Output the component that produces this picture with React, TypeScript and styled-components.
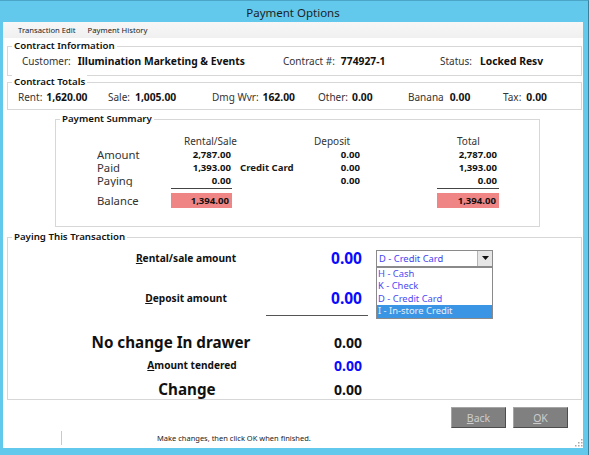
import React from "react";
import styled, { createGlobalStyle } from "styled-components";

const Global = createGlobalStyle`
  html, body { margin: 0; padding: 0; background: #ffffff; }
  body { font-family: "Noto Sans", "DejaVu Sans", sans-serif; color: #1a1a1a; }
  * { box-sizing: border-box; }
`;

const Frame = styled.div`
  width: 589px;
  height: 455px;
  background: #62c9ec;
  border-top: 1px solid #4aa5c6;
  border-right: 1px solid #3d7f98;
  padding: 0 5px 7px 3px;
  display: flex;
  flex-direction: column;
`;

const TitleBar = styled.div`
  height: 21px;
  padding-top: 2px;
  text-align: center;
  font-size: 11.5px;
  line-height: 19px;
  color: #1e1e1e;
`;

const Client = styled.div`
  flex: 1;
  background: #ffffff;
  display: flex;
  flex-direction: column;
  position: relative;
`;

const MenuBar = styled.div`
  height: 16px;
  background: linear-gradient(#f7f7f7, #f0f0f0);
  display: flex;
  align-items: center;
  gap: 12px;
  padding-left: 15px;
  font-size: 7.7px;
  color: #222;
`;

const Body = styled.div`
  padding: 0 1px 0 4px;
  display: flex;
  flex-direction: column;
`;

const Group = styled.div<{ $h: number; $mt: number; $ml?: number; $mr?: number }>`
  height: ${(p) => p.$h}px;
  margin: ${(p) => `${p.$mt}px ${p.$mr ?? 0}px 0 ${p.$ml ?? 0}px`};
  border: 1px solid #d7d7d7;
  position: relative;
`;

const Legend = styled.div`
  width: fit-content;
  margin: -8px 0 0 4px;
  padding: 0 2px;
  height: 14px;
  line-height: 14px;
  background: #ffffff;
  font-size: 9.7px;
  font-weight: 600;
  color: #111;
`;

const InfoRow = styled.div<{ $pl: number }>`
  height: 16px;
  display: flex;
  align-items: center;
  padding-left: ${(p) => p.$pl}px;
  font-size: 10.3px;
`;

const Field = styled.div<{ $w?: number; $gap: number }>`
  width: ${(p) => (p.$w ? `${p.$w}px` : "auto")};
  flex: ${(p) => (p.$w ? "none" : "1")};
  display: flex;
  align-items: baseline;
  gap: ${(p) => p.$gap}px;
  white-space: nowrap;
`;

const FieldLabel = styled.span`
  color: #333;
  font-size: 10px;
`;

const FieldValue = styled.span`
  font-weight: 700;
  color: #111;
`;

const SummaryGrid = styled.div`
  display: grid;
  grid-template-columns: 74px 61px 8px 72px 48px 77px 62px;
  grid-template-rows: repeat(4, 13px) 6px 15px;
  margin: 9px 0 0 41px;
  font-size: 11px;
`;

const HeadCell = styled.div<{ $pl: number }>`
  padding-left: ${(p) => p.$pl}px;
  white-space: nowrap;
  line-height: 13px;
  font-size: 10px;
  color: #333;
`;

const RowLabel = styled.div`
  line-height: 13px;
  height: 13px;
  overflow: hidden;
  font-size: 11.3px;
  color: #333;
`;

const BalanceLabel = styled.div`
  line-height: 15px;
  font-size: 11.3px;
  color: #333;
`;

const Num = styled.div<{ $pr: number }>`
  text-align: right;
  padding-right: ${(p) => p.$pr}px;
  font-weight: 700;
  font-size: 9.6px;
  line-height: 13px;
  white-space: nowrap;
  color: #111;
`;

const Method = styled.div`
  font-weight: 700;
  font-size: 9.6px;
  line-height: 13px;
  white-space: nowrap;
`;

const Rule = styled.div`
  margin-top: 1px;
  border-top: 1px solid #444;
`;

const Pink = styled.div`
  background: #f08585;
  text-align: right;
  padding-right: 3px;
  font-weight: 700;
  font-size: 9.6px;
  line-height: 15px;
  color: #111;
`;

const PayArea = styled.div`
  display: flex;
  flex-direction: column;
`;

const PayRow = styled.div<{ $h: number; $mt: number }>`
  height: ${(p) => p.$h}px;
  margin-top: ${(p) => p.$mt}px;
  display: grid;
  grid-template-columns: 258px 102px 1fr;
  align-items: center;
`;

const PayLabel = styled.div<{ $size: number; $shift: number }>`
  padding-left: 98px;
  text-align: center;
  font-weight: 700;
  font-size: ${(p) => p.$size}px;
  white-space: nowrap;
  transform: translateX(${(p) => p.$shift}px);
  color: #111;
`;

const Amount = styled.div<{ $blue?: boolean; $size: number }>`
  text-align: right;
  padding-right: 6px;
  font-weight: 700;
  font-size: ${(p) => p.$size}px;
  color: ${(p) => (p.$blue ? "#0a0aff" : "#111")};
`;

const AmountRule = styled.div`
  margin: 3px 0 0 258px;
  width: 102px;
  border-top: 1px solid #555;
`;

const SelectWrap = styled.div`
  position: relative;
  margin-left: 8px;
  width: 117px;
`;

const SelectBox = styled.div`
  height: 17px;
  border: 1px solid #8a8a8a;
  display: flex;
  align-items: center;
  background: #fff;
`;

const SelectText = styled.span`
  flex: 1;
  padding-left: 2px;
  font-size: 9.4px;
  color: #4242f0;
`;

const SelectArrow = styled.span`
  width: 15px;
  height: 15px;
  background: #e6e6e6;
  border-left: 1px solid #b5b5b5;
  display: flex;
  align-items: center;
  justify-content: center;
`;

const DropList = styled.div`
  position: absolute;
  top: 17px;
  left: 0;
  width: 117px;
  border: 1px solid #8a8a8a;
  background: #fff;
  z-index: 2;
`;

const DropItem = styled.div<{ $sel?: boolean }>`
  height: 12.6px;
  line-height: 12.6px;
  padding-left: 1px;
  font-size: 9.4px;
  white-space: nowrap;
  background: ${(p) => (p.$sel ? "#3a95e4" : "transparent")};
  color: ${(p) => (p.$sel ? "#e8eefa" : "#4a4af2")};
`;

const ButtonRow = styled.div`
  margin-top: 7px;
  height: 21px;
  display: flex;
  justify-content: flex-end;
  gap: 7px;
  padding-right: 15px;
`;

const Button = styled.button`
  width: 55px;
  height: 21px;
  background: #808080;
  border: 1px solid;
  border-color: #a5a5a5 #4d4d4d #4d4d4d #a5a5a5;
  color: #cdcdcd;
  font-family: inherit;
  font-size: 10.5px;
  padding: 0;
`;

const StatusBar = styled.div`
  height: 20px;
  display: flex;
  align-items: center;
  font-size: 7.5px;
  color: #222;
`;

const StatusPane = styled.div`
  width: 59px;
  height: 14px;
  border-right: 1px solid #c9c9c9;
`;

const StatusText = styled.div`
  padding-left: 95px;
  flex: 1;
`;

const Grip = styled.svg`
  align-self: flex-end;
  margin: 0 0 1px 0;
`;

const Small = styled.span`
  text-decoration: underline;
`;

export default function App() {
  return (
    <>
      <Global />
      <Frame>
        <TitleBar>Payment Options</TitleBar>
        <Client>
          <MenuBar>
            <span>Transaction Edit</span>
            <span>Payment History</span>
          </MenuBar>
          <Body>
            <Group $h={30} $mt={8}>
              <Legend>Contract Information</Legend>
              <InfoRow $pl={14}>
                <Field $w={261} $gap={7}>
                  <FieldLabel>Customer:</FieldLabel>
                  <FieldValue>Illumination Marketing &amp; Events</FieldValue>
                </Field>
                <Field $w={157} $gap={6}>
                  <FieldLabel>Contract #:</FieldLabel>
                  <FieldValue>774927-1</FieldValue>
                </Field>
                <Field $gap={8}>
                  <FieldLabel>Status:</FieldLabel>
                  <FieldValue>Locked Resv</FieldValue>
                </Field>
              </InfoRow>
            </Group>

            <Group $h={28} $mt={6}>
              <Legend>Contract Totals</Legend>
              <InfoRow $pl={10}>
                <Field $w={90} $gap={4}>
                  <FieldLabel>Rent:</FieldLabel>
                  <FieldValue>1,620.00</FieldValue>
                </Field>
                <Field $w={104} $gap={5}>
                  <FieldLabel>Sale:</FieldLabel>
                  <FieldValue>1,005.00</FieldValue>
                </Field>
                <Field $w={106} $gap={4}>
                  <FieldLabel>Dmg Wvr:</FieldLabel>
                  <FieldValue>162.00</FieldValue>
                </Field>
                <Field $w={90} $gap={4}>
                  <FieldLabel>Other:</FieldLabel>
                  <FieldValue>0.00</FieldValue>
                </Field>
                <Field $w={95} $gap={6}>
                  <FieldLabel>Banana</FieldLabel>
                  <FieldValue>0.00</FieldValue>
                </Field>
                <Field $gap={5}>
                  <FieldLabel>Tax:</FieldLabel>
                  <FieldValue>0.00</FieldValue>
                </Field>
              </InfoRow>
            </Group>

            <Group $h={108} $mt={9} $ml={48} $mr={42}>
              <Legend>Payment Summary</Legend>
              <SummaryGrid>
                <div />
                <HeadCell $pl={13}>Rental/Sale</HeadCell>
                <div />
                <div />
                <HeadCell $pl={2}>Deposit</HeadCell>
                <div />
                <HeadCell $pl={20}>Total</HeadCell>

                <RowLabel>Amount</RowLabel>
                <Num $pr={1}>2,787.00</Num>
                <div />
                <div />
                <Num $pr={0}>0.00</Num>
                <div />
                <Num $pr={2}>2,787.00</Num>

                <RowLabel>Paid</RowLabel>
                <Num $pr={1}>1,393.00</Num>
                <div />
                <Method>Credit Card</Method>
                <Num $pr={0}>0.00</Num>
                <div />
                <Num $pr={2}>1,393.00</Num>

                <RowLabel>Paying</RowLabel>
                <Num $pr={1}>0.00</Num>
                <div />
                <div />
                <Num $pr={0}>0.00</Num>
                <div />
                <Num $pr={2}>0.00</Num>

                <div />
                <Rule />
                <div />
                <div />
                <div />
                <div />
                <Rule />

                <BalanceLabel>Balance</BalanceLabel>
                <Pink>1,394.00</Pink>
                <div />
                <div />
                <div />
                <div />
                <Pink>1,394.00</Pink>
              </SummaryGrid>
            </Group>

            <Group $h={163} $mt={10}>
              <Legend>Paying This Transaction</Legend>
              <PayArea>
                <PayRow $h={28} $mt={0}>
                  <PayLabel $size={10.2} $shift={0}>
                    <Small>R</Small>ental/sale amount
                  </PayLabel>
                  <Amount $blue $size={15.5}>0.00</Amount>
                  <SelectWrap>
                    <SelectBox>
                      <SelectText>D - Credit Card</SelectText>
                      <SelectArrow>
                        <svg width="7" height="4" viewBox="0 0 7 4">
                          <path d="M0 0h7L3.5 4z" fill="#111" />
                        </svg>
                      </SelectArrow>
                    </SelectBox>
                    <DropList>
                      <DropItem>H - Cash</DropItem>
                      <DropItem>K - Check</DropItem>
                      <DropItem>D - Credit Card</DropItem>
                      <DropItem $sel>I - In-store Credit</DropItem>
                    </DropList>
                  </SelectWrap>
                </PayRow>
                <PayRow $h={28} $mt={12}>
                  <PayLabel $size={10.2} $shift={0}>
                    <Small>D</Small>eposit amount
                  </PayLabel>
                  <Amount $blue $size={15.5}>0.00</Amount>
                  <div />
                </PayRow>
                <AmountRule />
                <PayRow $h={24} $mt={14}>
                  <PayLabel $size={15.2} $shift={-15}>No change In drawer</PayLabel>
                  <Amount $size={14}>0.00</Amount>
                  <div />
                </PayRow>
                <PayRow $h={22} $mt={0}>
                  <PayLabel $size={10.1} $shift={6}>
                    <Small>A</Small>mount tendered
                  </PayLabel>
                  <Amount $blue $size={14}>0.00</Amount>
                  <div />
                </PayRow>
                <PayRow $h={20} $mt={3}>
                  <PayLabel $size={15.2} $shift={1}>Change</PayLabel>
                  <Amount $size={14}>0.00</Amount>
                  <div />
                </PayRow>
              </PayArea>
            </Group>
          </Body>

          <ButtonRow>
            <Button>
              <Small>B</Small>ack
            </Button>
            <Button>
              <Small>O</Small>K
            </Button>
          </ButtonRow>

          <StatusBar>
            <StatusPane />
            <StatusText>Make changes, then click OK when finished.</StatusText>
            <Grip width="8" height="8" viewBox="0 0 8 8">
              <g fill="#a8a8a8">
                <rect x="6" y="0" width="1.5" height="1.5" />
                <rect x="3" y="3" width="1.5" height="1.5" />
                <rect x="6" y="3" width="1.5" height="1.5" />
                <rect x="0" y="6" width="1.5" height="1.5" />
                <rect x="3" y="6" width="1.5" height="1.5" />
                <rect x="6" y="6" width="1.5" height="1.5" />
              </g>
            </Grip>
          </StatusBar>
        </Client>
      </Frame>
    </>
  );
}
